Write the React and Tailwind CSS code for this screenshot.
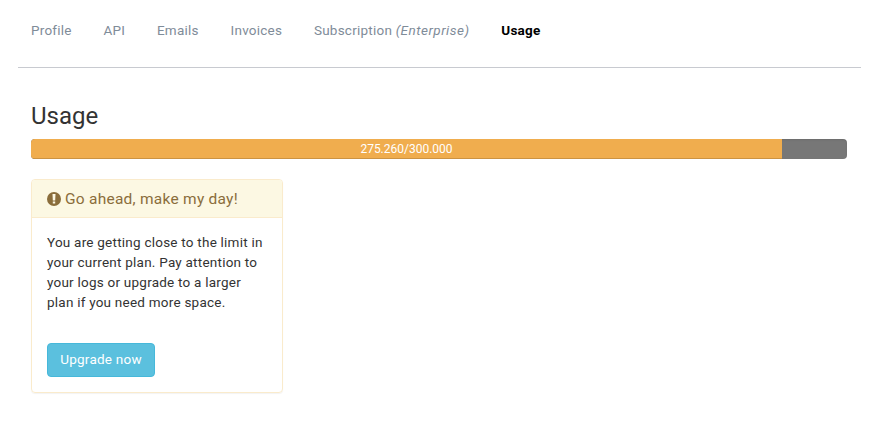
const tabs = ["Profile", "API", "Emails", "Invoices"];

export default function App() {
  return (
    <div className="h-[440px] w-[880px] bg-white pl-[18px] pr-[19px] font-['Roboto',sans-serif] text-[13.5px] leading-5 tracking-[0.23px] text-[#333]">
      <nav className="flex h-[68px] gap-[31.8px] border-b border-[#c8cad0] pl-[13px] pt-5 text-[#7f8c99]">
        {tabs.map((t) => (
          <a key={t}>{t}</a>
        ))}
        <a>
          Subscription <em className="tracking-[0.48px]">(Enterprise)</em>
        </a>
        <a className="font-bold text-black">Usage</a>
      </nav>
      <main className="pl-[13px] pr-[14px] pt-[35px]">
        <h1 className="text-2xl leading-[26px] tracking-normal">Usage</h1>
        <div className="mt-[10px] flex h-5 overflow-hidden rounded bg-[#777] shadow-[inset_0_1px_2px_rgba(0,0,0,0.1)]">
          <div className="w-[751px] bg-[#f0ad4e] text-center text-xs leading-5 tracking-normal text-white shadow-[inset_0_-1px_0_rgba(0,0,0,0.15)]">
            275.260/300.000
          </div>
        </div>
        <section className="mt-5 h-[214px] w-[252px] rounded border border-[#faebcc] shadow-[0_1px_1px_rgba(0,0,0,0.05)]">
          <h2 className="flex h-[38px] items-center gap-1 rounded-t-[3px] border-b border-[#faebcc] bg-[#fcf8e3] pl-[15px] text-[15.5px] tracking-[0.25px] text-[#8a6d3b]">
            <svg className="size-[14px]" viewBox="0 0 14 14">
              <circle cx="7" cy="7" r="7" fill="#8a6d3b" />
              <path d="M5.5 2h3L8.2 8.4H5.8z M5.8 9.4h2.4v2.2H5.8z" fill="#fcf8e3" />
            </svg>
            Go ahead, make my day!
          </h2>
          <div className="px-[15px] pt-[14px]">
            <p className="whitespace-nowrap">
              You are getting close to the limit in<br />
              your current plan. Pay attention to<br />
              your logs or upgrade to a larger<br />
              plan if you need more space.
            </p>
            <button className="mt-[31px] h-[34px] w-[108px] rounded border border-[#46b8da] bg-[#5bc0de] pb-[2px] tracking-[0.23px] text-white">
              Upgrade now
            </button>
          </div>
        </section>
      </main>
    </div>
  );
}
